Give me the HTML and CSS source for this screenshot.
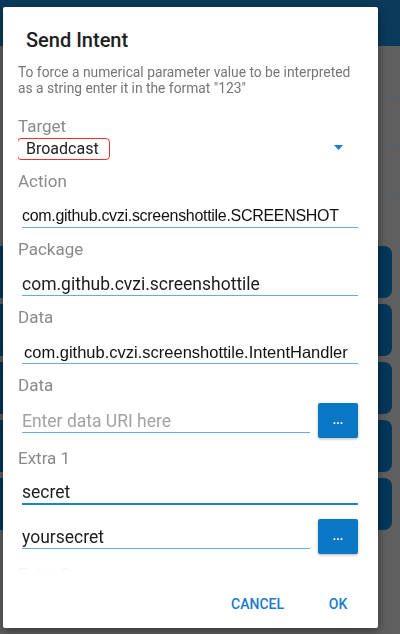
FILE: index.html
```html
<!DOCTYPE html>
<html lang="en">
<head>
<meta charset="utf-8">
<title>Send Intent</title>
<link rel="stylesheet" href="styles.css">
</head>
<body>
<div class="app">
  <div class="appbar"></div>
  <div class="row r1"></div>
  <div class="row r2"></div>
  <div class="row r3"></div>
  <div class="cards">
    <div class="card"></div>
    <div class="card"></div>
    <div class="card"></div>
    <div class="card"></div>
    <div class="card"></div>
  </div>
</div>

<div class="dialog">
  <h1 class="title">Send Intent</h1>
  <div class="body">
    <p class="desc">To force a numerical parameter value to be interpreted as a string enter it in the format "123"</p>

    <div class="label">Target</div>
    <div class="spinner">
      <span class="spinner-value">Broadcast</span>
      <svg class="caret" width="9" height="5" viewBox="0 0 9 5"><polygon points="0,0 9,0 4.5,5" fill="#1a7bd0"/></svg>
    </div>

    <div class="label">Action</div>
    <div class="field"><span class="value arial action">com.github.cvzi.screenshottile.SCREENSHOT</span></div>

    <div class="label">Package</div>
    <div class="field"><span class="value">com.github.cvzi.screenshottile</span></div>

    <div class="label">Data</div>
    <div class="field"><span class="value arial data">com.github.cvzi.screenshottile.IntentHandler</span></div>

    <div class="label">Data</div>
    <div class="field-row">
      <div class="field"><span class="value placeholder">Enter data URI here</span></div>
      <button class="more">...</button>
    </div>

    <div class="label">Extra 1</div>
    <div class="field focused"><span class="value">secret</span></div>

    <div class="field-row">
      <div class="field"><span class="value">yoursecret</span></div>
      <button class="more">...</button>
    </div>

    <div class="label">Extra 2</div>
  </div>
  <div class="actions">
    <button class="action-btn cancel">CANCEL</button>
    <button class="action-btn ok">OK</button>
  </div>
</div>
</body>
</html>
```

FILE: styles.css
```css
html, body {
  margin: 0;
  padding: 0;
}

body {
  width: 400px;
  height: 634px;
  overflow: hidden;
  position: relative;
  background: #5f5f5f;
  font-family: Roboto, "Noto Sans", sans-serif;
}

/* dimmed app behind the dialog */
.app {
  display: flex;
  flex-direction: column;
}

.appbar {
  height: 46px;
  background: #0b3a5b;
}

.row {
  border-bottom: 1px solid #56606a;
}

.r1 { height: 51px; }
.r2 { height: 47px; }
.r3 { height: 48px; }

.cards {
  display: flex;
  flex-direction: column;
  gap: 6px;
  padding-top: 51px;
  padding-right: 8px;
}

.card {
  height: 52px;
  background: #04375a;
  border-radius: 0 8px 8px 0;
}

/* dialog */
.dialog {
  position: absolute;
  left: 3px;
  top: 7px;
  width: 375px;
  height: 621px;
  box-sizing: border-box;
  padding: 19px 0 0 15px;
  background: #ffffff;
  border-radius: 2px;
  box-shadow: 0 3px 10px rgba(0, 0, 0, 0.45);
  display: flex;
  flex-direction: column;
}

.title {
  margin: 0 0 10px 8px;
  font-size: 20px;
  line-height: 28px;
  font-weight: 500;
  color: #212121;
}

.body {
  flex: 1;
  min-height: 0;
  overflow: hidden;
  padding-right: 20px;
  -webkit-mask-image: linear-gradient(to bottom, #000 calc(100% - 18px), rgba(0, 0, 0, 0.08) calc(100% - 4px), transparent);
  mask-image: linear-gradient(to bottom, #000 calc(100% - 18px), rgba(0, 0, 0, 0.08) calc(100% - 4px), transparent);
}

.desc {
  margin: 0 0 18px 0;
  font-size: 13.8px;
  line-height: 16px;
  color: #757575;
}

.label {
  font-size: 17px;
  line-height: 24px;
  color: #8a8a8a;
}

.spinner {
  display: flex;
  align-items: center;
  justify-content: space-between;
  margin-bottom: 9px;
}

.spinner-value {
  margin-left: -1px;
  padding: 0 10px 0 8px;
  border: 1px solid #e8302c;
  border-radius: 4px;
  font-size: 16px;
  line-height: 20px;
  color: #212121;
}

.caret {
  display: block;
  margin-right: 15px;
  margin-top: -3px;
}

.field {
  margin: 0 0 9px 4px;
  padding-top: 12px;
  border-bottom: 1px solid #6aaae4;
  font-size: 17.5px;
  line-height: 22px;
  color: #1c1c1c;
  white-space: nowrap;
}

.field.focused {
  padding-top: 11px;
  border-bottom: 2px solid #1f7fd0;
  margin-bottom: 8px;
}

.value {
  display: block;
}

.arial {
  font-family: "Liberation Sans", Arial, sans-serif;
  color: #111111;
}

.action {
  font-size: 16px;
  letter-spacing: -0.3px;
}

.data {
  font-size: 16.5px;
  padding-left: 2px;
}

.placeholder {
  color: #a2a2a2;
}

.field-row {
  display: flex;
  align-items: flex-end;
  gap: 8px;
  padding-top: 6px;
  margin-bottom: 8px;
}

.field-row .field {
  flex: 1;
  padding-top: 0;
  margin-bottom: 5px;
}

.more {
  flex: none;
  width: 40px;
  height: 35px;
  border: 0;
  border-radius: 2px;
  background: #0a77c4;
  color: #ffffff;
  font-family: Roboto, sans-serif;
  font-size: 12px;
  font-weight: 700;
  line-height: 35px;
  padding: 0;
  box-shadow: 0 1px 3px rgba(0, 0, 0, 0.3);
}

.actions {
  display: flex;
  justify-content: flex-end;
  gap: 14px;
  padding: 13px 8px 6px 0;
}

.action-btn {
  height: 36px;
  min-width: 64px;
  padding: 0 8px;
  border: 0;
  background: transparent;
  font-family: Roboto, sans-serif;
  font-size: 14px;
  font-weight: 500;
  color: #1a7bc9;
}
```
